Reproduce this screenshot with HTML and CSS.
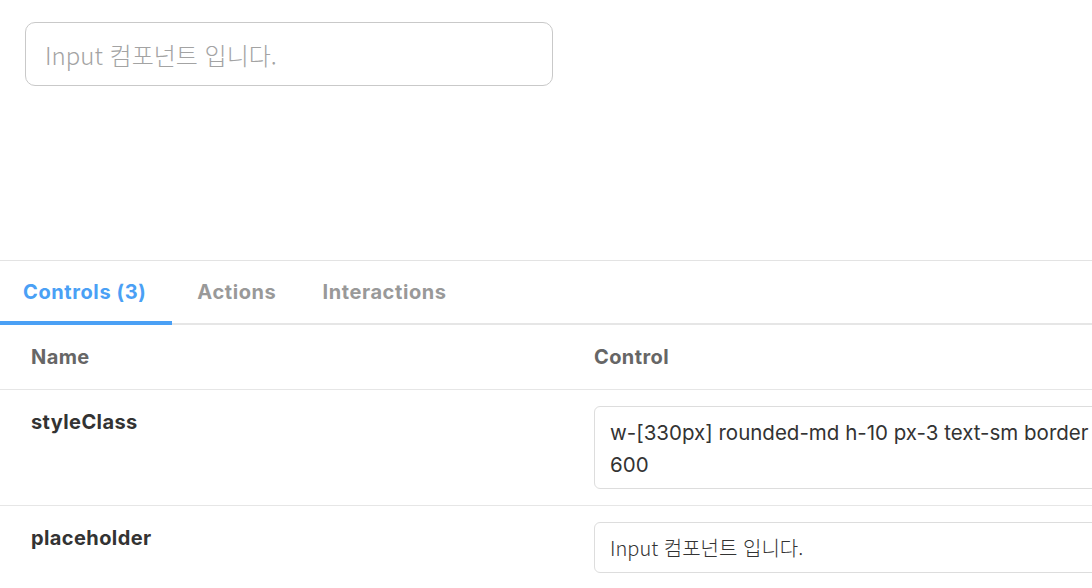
FILE: index.html
```html
<!DOCTYPE html>
<html lang="ko">
<head>
<meta charset="utf-8">
<title>Input</title>
<link rel="stylesheet" href="styles.css">
</head>
<body>
<div class="page">
  <section class="preview">
    <input class="demo-input" type="text" placeholder="Input 컴포넌트 입니다.">
  </section>
  <section class="panel">
    <nav class="tabs">
      <div class="tab active">Controls (3)</div>
      <div class="tab">Actions</div>
      <div class="tab">Interactions</div>
    </nav>
    <div class="table">
      <div class="row head">
        <div class="col-name">Name</div>
        <div class="col-control">Control</div>
      </div>
      <div class="row">
        <div class="col-name prop">styleClass</div>
        <div class="col-control">
          <div class="textarea">w-[330px] rounded-md h-10 px-3 text-sm border border-gray-300 focus:outline-none focus:border-blue-<br>600</div>
        </div>
      </div>
      <div class="row">
        <div class="col-name prop">placeholder</div>
        <div class="col-control">
          <div class="field">Input 컴포넌트 입니다.</div>
        </div>
      </div>
    </div>
  </section>
</div>
</body>
</html>
```

FILE: styles.css
```css
html, body {
  margin: 0;
  padding: 0;
  background: #ffffff;
  overflow: hidden;
}
.page {
  width: 1092px;
  height: 588px;
  overflow: hidden;
  font-family: Inter, "Liberation Sans", "Noto Sans CJK KR", sans-serif;
  color: #333333;
}
.preview {
  height: 260px;
  box-sizing: border-box;
  padding: 22px 25px 0;
}
.demo-input {
  display: block;
  box-sizing: border-box;
  width: 528px;
  height: 64px;
  margin: 0;
  border: 1px solid #c9c9c9;
  border-radius: 10px;
  padding: 0 19px;
  font-family: "Noto Sans CJK KR", "Liberation Sans", sans-serif;
  font-weight: 300;
  font-size: 24px;
  color: #333;
  background: #fff;
  outline: none;
}
.demo-input::placeholder {
  color: #a3a3a3;
}
.panel {
  border-top: 1px solid #e3e3e3;
}
.tabs {
  display: flex;
  height: 64px;
  box-shadow: inset 0 -2px 0 #e6e6e6;
}
.tab {
  padding: 0 23px;
  font-size: 20px;
  font-weight: 700;
  letter-spacing: 0.6px;
  color: #999999;
  line-height: 62px;
  height: 64px;
  box-sizing: border-box;
}
.tab.active {
  padding: 0 26px 0 23px;
  margin-right: 2px;
  color: #4aa0f5;
  border-bottom: 4px solid #4aa0f5;
  line-height: 62px;
}
.row {
  display: flex;
  border-bottom: 1px solid #e6e6e6;
  padding: 16px 0;
}
.row.head {
  padding: 0;
  height: 64px;
  align-items: center;
}
.col-name {
  width: 594px;
  box-sizing: border-box;
  padding-left: 31px;
  font-size: 20px;
  font-weight: 700;
  letter-spacing: 0.4px;
  line-height: 33px;
}
.head .col-name, .head .col-control {
  color: #666666;
  font-size: 20px;
  font-weight: 700;
  letter-spacing: 0.4px;
}
.prop {
  color: #333333;
}
.col-control {
  flex: 1;
  min-width: 0;
}
.textarea, .field {
  width: 640px;
  box-sizing: border-box;
  border: 1px solid #dddddd;
  border-radius: 6px;
  padding: 10px 15px 7px;
  font-family: Inter, "Liberation Sans", "Noto Sans CJK KR", sans-serif;
  font-size: 20.5px;
  line-height: 32px;
  color: #333333;
  white-space: nowrap;
  overflow: hidden;
}
.field {
  height: 51px;
  padding: 9px 15px 8px;
  line-height: 32px;
  font-family: "Noto Sans CJK KR", "Liberation Sans", sans-serif;
  font-weight: 300;
  font-size: 20px;
}
```
